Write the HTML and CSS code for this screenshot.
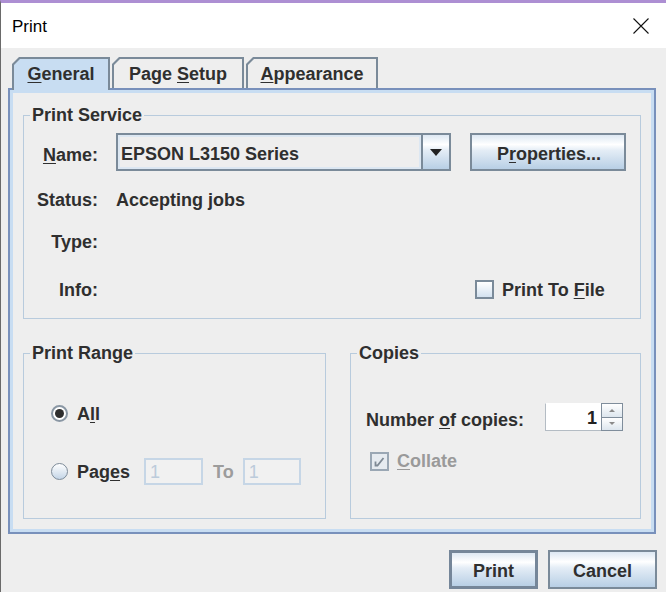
FILE: index.html
```html
<!DOCTYPE html>
<html lang="en">
<head>
<meta charset="utf-8">
<title>Print</title>
<link rel="stylesheet" href="styles.css">
</head>
<body>
<div class="window">
  <div class="titlebar">
    <span class="title">Print</span>
    <svg class="close" width="16" height="16" viewBox="0 0 16 16"><path d="M0.5 0.5 L15.5 15.5 M15.5 0.5 L0.5 15.5" stroke="#111" stroke-width="1.1" fill="none"/></svg>
  </div>
  <div class="content">
    <div class="tabs">
      <div class="tab tab-general selected"><span class="tab-in"><span><u>G</u>eneral</span></span></div>
      <div class="tab tab-wide"><span class="tab-in"><span>Page <u>S</u>etup</span></span></div>
      <div class="tab tab-wide"><span class="tab-in"><span><u>A</u>ppearance</span></span></div>
    </div>
    <div class="panel">
      <fieldset class="group">
        <legend>Print Service</legend>
        <div class="service-body">
          <div class="srow srow-name">
            <span class="lbl lbl-name"><u>N</u>ame:</span>
            <div class="combo">
              <span class="combo-field">EPSON L3150 Series</span>
              <span class="combo-btn"><svg width="12" height="7" viewBox="0 0 12 7"><path d="M0 0 H12 L6 7 Z" fill="#222"/></svg></span>
            </div>
            <button class="btn btn-props"><span>P<u>r</u>operties...</span></button>
          </div>
          <div class="srow srow-gap">
            <span class="lbl">Status:</span>
            <span class="val">Accepting jobs</span>
            <span></span>
          </div>
          <div class="srow srow-gap">
            <span class="lbl">Type:</span>
            <span></span>
            <span></span>
          </div>
          <div class="srow srow-info">
            <span class="lbl">Info:</span>
            <span></span>
            <span class="checkline check-file"><span class="cbox"></span><span>Print To <u>F</u>ile</span></span>
          </div>
        </div>
      </fieldset>
      <div class="lower">
        <fieldset class="group">
          <legend>Print Range</legend>
          <div class="range-body">
            <div class="rrow"><span class="radio on"></span><span>A<u>l</u>l</span></div>
            <div class="rrow rrow-pages">
              <span class="radio"></span><span class="pages-lbl">Pag<u>e</u>s</span>
              <span class="tfield">1</span>
              <span class="to">To</span>
              <span class="tfield tfield-b">1</span>
            </div>
          </div>
        </fieldset>
        <fieldset class="group">
          <legend>Copies</legend>
          <div class="copies-body">
            <div class="crow">
              <span class="copies-lbl">Number <u>o</u>f copies:</span>
              <div class="spinner">
                <span class="spin-field">1</span>
                <span class="spin-btns">
                  <span class="spin-btn"><svg width="6" height="4" viewBox="0 0 6 4"><path d="M0 4 H6 L3 1 Z" fill="#8a8a8a"/></svg></span>
                  <span class="spin-btn"><svg width="6" height="4" viewBox="0 0 6 4"><path d="M0 0 H6 L3 3 Z" fill="#8a8a8a"/></svg></span>
                </span>
              </div>
            </div>
            <div class="crow-collate checkline disabled">
              <span class="cbox cbox-dis"><svg width="15" height="15" viewBox="0 0 15 15"><path d="M3.5 7.5 V11.5 H5.5 L11.5 4" stroke="#7f8a95" stroke-width="1.8" fill="none"/></svg></span>
              <span><u>C</u>ollate</span>
            </div>
          </div>
        </fieldset>
      </div>
    </div>
    <div class="actions">
      <button class="btn btn-print"><span>Print</span></button>
      <button class="btn btn-cancel"><span>Cancel</span></button>
    </div>
  </div>
</div>
</body>
</html>
```
FILE: styles.css
```css
* { box-sizing: border-box; }
html, body { margin: 0; padding: 0; }
body {
  background: #eeeeee;
  font-family: "Liberation Sans", Arial, sans-serif;
  font-size: 18px;
  font-weight: bold;
  line-height: 20px;
  color: #2f2f2f;
  overflow: hidden;
}
u { text-decoration-thickness: 1px; text-underline-offset: 2px; }

.window {
  width: 666px;
  height: 592px;
  border-top: 3px solid #ad8fd3;
  border-left: 1px solid #6a6a6a;
  background: #eeeeee;
}
.titlebar {
  height: 45px;
  background: #ffffff;
  display: flex;
  align-items: center;
  justify-content: space-between;
  padding: 0 17px 0 11px;
}
.title {
  font-weight: normal;
  font-size: 17px;
  color: #000;
  padding-top: 2px;
}
.close { display: block; }

.content { padding: 9px 10px 0 7px; }

.tabs {
  display: flex;
  align-items: flex-end;
  gap: 2px;
  margin-left: 4px;
  position: relative;
  z-index: 1;
}
.tab {
  height: 31px;
  background: #7a8a99;
  padding: 2px 2px 0 2px;
  clip-path: polygon(7px 0, 100% 0, 100% 100%, 0 100%, 0 7px);
}
.tab.selected { height: 33px; margin-bottom: -2px; }
.tab-general { width: 98px; }
.tab-wide { width: 132px; }
.tab-in {
  display: flex;
  height: 100%;
  align-items: center;
  justify-content: center;
  background: #eeeeee;
  clip-path: polygon(6px 0, 100% 0, 100% 100%, 0 100%, 0 6px);
}
.tab.selected .tab-in { background: #c8ddf2; padding-bottom: 2px; }

.panel {
  border: 2px solid #7890bb;
  box-shadow: inset 0 0 0 3px #c8ddf2;
  padding: 15px 13px 13px;
}

.group {
  border: 1px solid #b8cbdd;
  margin: 0;
  padding: 0;
  min-width: 0;
}
.group legend {
  margin-left: 6px;
  padding: 0 2px;
  line-height: 20px;
}

.service-body { padding: 8px 0 15px 0; }
.srow {
  display: grid;
  grid-template-columns: 74px 335px 1fr;
  column-gap: 18px;
  align-items: center;
  height: 28px;
  padding-top: 1px;
}
.srow-name { height: 38px; padding-top: 0; }
.srow-gap { margin-top: 14px; }
.srow-info { margin-top: 20px; }
.lbl { text-align: right; }
.lbl-name { padding-top: 5px; }

.combo {
  display: flex;
  height: 38px;
  border: 2px solid #7a8a99;
}
.combo-field {
  flex: 1;
  display: flex;
  align-items: center;
  padding: 4px 0 0 3px;
  background: #eeeeee;
  box-shadow: inset 0 0 0 2px #dce7f2;
}
.combo-btn {
  width: 28px;
  display: flex;
  align-items: center;
  justify-content: center;
  border-left: 2px solid #7a8a99;
  background: linear-gradient(#dde8f3 0%, #ffffff 28%, #e4edf6 45%, #b8cfe5 100%);
}

.btn {
  font: inherit;
  color: #2f2f2f;
  border: 2px solid #7a8a99;
  background: linear-gradient(#dde8f3 0%, #ffffff 28%, #e4edf6 45%, #b8cfe5 100%);
  padding: 3px 0 0 0;
  margin: 0;
  display: flex;
  align-items: center;
  justify-content: center;
}
.btn-props { width: 156px; height: 38px; margin-left: 1px; padding-left: 2px; }

.checkline { display: flex; align-items: center; }
.check-file { margin-left: 6px; }
.cbox {
  width: 19px;
  height: 19px;
  flex: none;
  border: 2px solid #7a8a99;
  background: linear-gradient(#ffffff, #d3e1ef);
  margin-right: 8px;
  display: flex;
  align-items: center;
  justify-content: center;
}
.cbox-dis {
  border-color: #9aa7b4;
  background: #e6ebf0;
}
.disabled { color: #9a9a9a; }

.lower {
  display: grid;
  grid-template-columns: 303px 291px;
  column-gap: 24px;
  margin-top: 24px;
}

.range-body { padding: 36px 0 33px 27px; }
.rrow { display: flex; align-items: center; height: 28px; }
.rrow-pages { margin-top: 30px; }
.rrow > span:not(.radio):not(.tfield) { padding-top: 1px; }
.radio {
  width: 17px;
  height: 17px;
  flex: none;
  border-radius: 50%;
  border: 1px solid #7d8b99;
  background: linear-gradient(#ffffff, #c4d5e7);
  margin-right: 9px;
  display: flex;
  align-items: center;
  justify-content: center;
}
.radio.on {
  border: 2px solid #8a97a4;
  background: #ffffff;
}
.radio.on::after {
  content: "";
  width: 9px;
  height: 9px;
  border-radius: 50%;
  background: #2e2e2e;
}
.pages-lbl { margin-right: 14px; }
.tfield {
  width: 59px;
  height: 27px;
  border: 2px solid #c6d6e6;
  background: #f1f1f1;
  color: #bccbdb;
  font-weight: normal;
  padding: 1px 0 0 4px;
  display: flex;
  align-items: center;
}
.tfield-b { width: 58px; }
.to { color: #9c9c9c; margin: 0 9px 0 10px; }

.copies-body { padding: 40px 17px 43px 15px; }
.crow {
  display: flex;
  justify-content: space-between;
  align-items: center;
  height: 28px;
}
.copies-lbl { padding-top: 5px; }
.spinner { display: flex; width: 78px; height: 28px; }
.spin-field {
  flex: 1;
  background: #ffffff;
  border: 1px solid #b4bcc4;
  border-top-color: #ffffff;
  border-right: none;
  color: #222;
  display: flex;
  align-items: center;
  justify-content: flex-end;
  padding: 2px 4px 0 0;
}
.spin-btns { width: 22px; display: flex; flex-direction: column; }
.spin-btn {
  flex: 1;
  border: 1px solid #7f8d9b;
  background: linear-gradient(#ffffff, #dde6ee);
  display: flex;
  align-items: center;
  justify-content: center;
}
.spin-btn + .spin-btn { border-top: none; }
.crow-collate { margin-top: 16px; height: 28px; padding-left: 4px; }

.actions {
  display: flex;
  justify-content: flex-end;
  gap: 10px;
  margin-top: 16px;
  margin-right: -1px;
}
.btn-print { width: 89px; height: 39px; border: 3px solid #758699; }
.btn-cancel { width: 109px; height: 39px; }
```
